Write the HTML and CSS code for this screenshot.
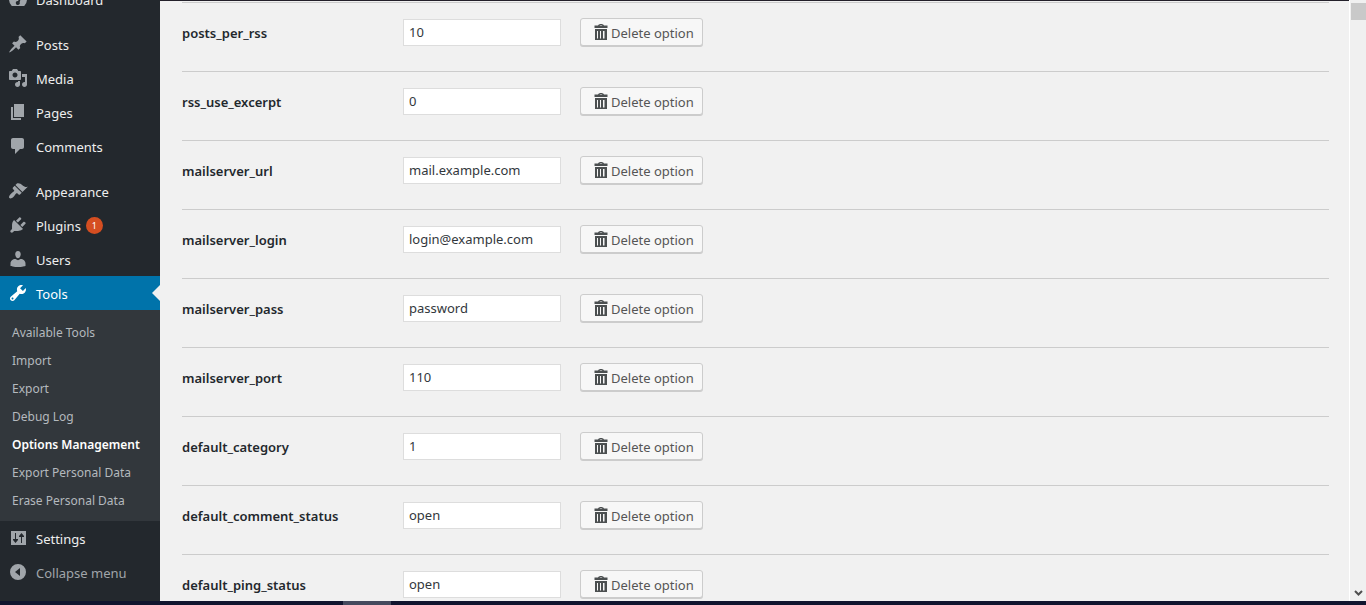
FILE: index.html
```html
<!DOCTYPE html>
<html lang="en">
<head>
<meta charset="utf-8">
<title>Options Management</title>
<link rel="stylesheet" href="styles.css">
</head>
<body>
<svg class="sprite" aria-hidden="true">
  <symbol id="trash" viewBox="0 0 14 17"><path fill-rule="evenodd" d="M4 1.500C4.500.5 5.500 0 7 0s2.500.5 3 1.500h3.500V4H.5V1.500zM5.500 1.500h3C8 1.100 7.600 1 7 1s-1 .1-1.500.5zM1 5h12v11H1zM3 7v7.500h1V7zM6 7v7.500h1V7zM9 7v7.500h1.500V7z"/></symbol>
</svg>
<div class="workspace">
  <nav class="sidebar" aria-label="Main menu">
    <ul class="menu">
      <li><a class="menu-link" href="#"><svg class="icon" viewBox="0 0 20 20"><path fill-rule="evenodd" d="M3.760 17h12.480A9 9 0 1 0 3.760 17zM10 4a1 1 0 1 1 0 2 1 1 0 0 1 0-2zM4 9a1 1 0 1 1 0 2 1 1 0 0 1 0-2zm12 0a1 1 0 1 1 0 2 1 1 0 0 1 0-2zm-2-3-2.400 7.200A2 2 0 1 1 10 12z"/></svg>Dashboard</a></li>
      <li class="group"><a class="menu-link" href="#"><svg class="icon" viewBox="0 0 20 20"><path d="M10.440 3.020l1.820-1.820 6.360 6.350-1.830 1.820c-1.050-.68-2.480-.57-3.410.36l-.75.75c-.92.93-1.040 2.350-.35 3.410l-1.830 1.820-2.410-2.410-2.800 2.790c-.42.42-3.380 2.710-3.800 2.290s1.860-3.390 2.280-3.810l2.790-2.790L4.100 9.360l1.830-1.820c1.050.69 2.480.57 3.400-.36l.75-.75c.93-.92 1.050-2.350.36-3.410z"/></svg>Posts</a></li>
      <li><a class="menu-link" href="#"><svg class="icon" viewBox="0 0 20 20"><path fill-rule="evenodd" d="M13 11V4c0-.55-.45-1-1-1h-1.670L9 1H5L3.670 3H2c-.55 0-1 .45-1 1v7c0 .55.45 1 1 1h10c.55 0 1-.45 1-1zM7 4.500c1.380 0 2.500 1.120 2.500 2.500S8.380 9.500 7 9.500 4.500 8.380 4.500 7 5.620 4.500 7 4.500zM14 6h5v10.500c0 1.380-1.120 2.500-2.500 2.500S14 17.880 14 16.500s1.120-2.500 2.500-2.500c.17 0 .34.02.5.05V9h-3V6zm-4 8.050V13h2v3.500c0 1.380-1.120 2.500-2.500 2.500S7 17.880 7 16.500 8.120 14 9.500 14c.17 0 .34.02.5.05z"/></svg>Media</a></li>
      <li><a class="menu-link" href="#"><svg class="icon" viewBox="0 0 20 20"><path d="M6 15V2h10v13H6zm-1 1h8v2H3V5h2v11z"/></svg>Pages</a></li>
      <li><a class="menu-link" href="#"><svg class="icon" viewBox="0 0 20 20"><path d="M5 2h9c1.100 0 2 .9 2 2v7c0 1.100-.9 2-2 2h-2l-5 5v-5H5c-1.100 0-2-.9-2-2V4c0-1.100.9-2 2-2z"/></svg>Comments</a></li>
      <li class="group"><a class="menu-link" href="#"><svg class="icon" viewBox="0 0 20 20"><path d="M14.480 11.060L7.410 3.990l1.500-1.500c.5-.56 2.300-.47 3.510.32 1.210.8 1.430 1.280 2.910 2.100 1.180.64 2.450 1.260 4.450.85zm-.71.71L6.700 4.700 4.930 6.470c-.39.39-.39 1.020 0 1.410l1.060 1.060c.39.39.39 1.030 0 1.420-.6.6-1.430 1.110-2.210 1.690-.35.26-.7.53-1.010.84C1.430 14.230.4 16.080 1.400 17.070c.99 1 2.840-.03 4.180-1.360.31-.31.58-.66.85-1.020.57-.78 1.080-1.610 1.690-2.210.39-.39 1.020-.39 1.410 0l1.060 1.060c.39.39 1.020.39 1.410 0z"/></svg>Appearance</a></li>
      <li><a class="menu-link" href="#"><svg class="icon" viewBox="0 0 20 20"><path d="M13.110 4.360L9.870 7.600 8 5.730l3.240-3.240c.35-.34 1.050-.2 1.560.32.52.51.66 1.210.31 1.550zm-8 1.770l.91-1.120 9.010 9.010-1.190.84c-.71.71-2.630 1.160-3.820 1.160H6.140L4.900 17.260c-.59.59-1.540.59-2.120 0-.59-.58-.59-1.530 0-2.120l1.240-1.240v-3.880c0-1.130.4-3.190 1.090-3.890zm7.260 3.970l3.240-3.240c.34-.35 1.040-.21 1.550.31.52.51.66 1.210.31 1.550l-3.240 3.250z"/></svg>Plugins <span class="badge">1</span></a></li>
      <li><a class="menu-link" href="#"><svg class="icon" viewBox="0 0 20 20"><path d="M10 9.250c-2.270 0-2.730-3.440-2.730-3.440C7 4.020 7.820 2 9.970 2c2.160 0 2.980 2.020 2.710 3.810 0 0-.41 3.440-2.680 3.440zM7.500 10 10 11.300 12.500 10c2.800 0 5 1.900 5 4.500v2.500s-3.700 1.100-7.500 1.100S2.500 17 2.500 17v-2.500C2.500 11.900 4.700 10 7.500 10z"/></svg>Users</a></li>
      <li><a class="menu-link current" href="#"><svg class="icon" viewBox="0 0 20 20"><path fill-rule="evenodd" d="M16.680 9.770c-1.340 1.340-3.300 1.670-4.950.99l-5.410 6.520c-.99.99-2.590.99-3.580 0s-.99-2.590 0-3.570l6.520-5.420c-.68-1.650-.35-3.610.99-4.950 1.280-1.280 3.120-1.620 4.720-1.060l-2.890 2.890 2.820 2.820 2.860-2.870c.53 1.580.18 3.390-1.080 4.650zM3.810 16.210c.4.39 1.040.39 1.430 0 .4-.4.4-1.040 0-1.430-.39-.4-1.030-.4-1.430 0-.39.39-.39 1.030 0 1.430z"/></svg>Tools</a>
        <ul class="submenu">
          <li><a class="submenu-link" href="#">Available Tools</a></li>
          <li><a class="submenu-link" href="#">Import</a></li>
          <li><a class="submenu-link" href="#">Export</a></li>
          <li><a class="submenu-link" href="#">Debug Log</a></li>
          <li><a class="submenu-link selected" href="#" aria-current="page">Options Management</a></li>
          <li><a class="submenu-link" href="#">Export Personal Data</a></li>
          <li><a class="submenu-link" href="#">Erase Personal Data</a></li>
        </ul>
      </li>
      <li><a class="menu-link" href="#"><svg class="icon" viewBox="0 0 20 20"><path fill-rule="evenodd" d="M18 17V3H3v14zM7 5h1v6h2v1l-2.500 3L5 12v-1h2zM13 15h1V9h2V8l-2.500-3L11 8v1h2z"/></svg>Settings</a></li>
    </ul>
    <button class="collapse" type="button"><svg class="icon" viewBox="0 0 20 20"><path fill-rule="evenodd" d="M10 2a8 8 0 1 0 0 16 8 8 0 0 0 0-16zm2 4v8l-5-4z"/></svg>Collapse menu</button>
  </nav>
  <main class="content">
    <table class="options">
      <tbody>
        <tr><th scope="row"><label for="o1">posts_per_rss</label></th><td><div class="controls"><input class="field" id="o1" type="text" value="10"><button class="delete" type="button"><svg class="trash"><use href="#trash"/></svg>Delete option</button></div></td></tr>
        <tr><th scope="row"><label for="o2">rss_use_excerpt</label></th><td><div class="controls"><input class="field" id="o2" type="text" value="0"><button class="delete" type="button"><svg class="trash"><use href="#trash"/></svg>Delete option</button></div></td></tr>
        <tr><th scope="row"><label for="o3">mailserver_url</label></th><td><div class="controls"><input class="field" id="o3" type="text" value="mail.example.com"><button class="delete" type="button"><svg class="trash"><use href="#trash"/></svg>Delete option</button></div></td></tr>
        <tr><th scope="row"><label for="o4">mailserver_login</label></th><td><div class="controls"><input class="field" id="o4" type="text" value="login@example.com"><button class="delete" type="button"><svg class="trash"><use href="#trash"/></svg>Delete option</button></div></td></tr>
        <tr><th scope="row"><label for="o5">mailserver_pass</label></th><td><div class="controls"><input class="field" id="o5" type="text" value="password"><button class="delete" type="button"><svg class="trash"><use href="#trash"/></svg>Delete option</button></div></td></tr>
        <tr><th scope="row"><label for="o6">mailserver_port</label></th><td><div class="controls"><input class="field" id="o6" type="text" value="110"><button class="delete" type="button"><svg class="trash"><use href="#trash"/></svg>Delete option</button></div></td></tr>
        <tr><th scope="row"><label for="o7">default_category</label></th><td><div class="controls"><input class="field" id="o7" type="text" value="1"><button class="delete" type="button"><svg class="trash"><use href="#trash"/></svg>Delete option</button></div></td></tr>
        <tr><th scope="row"><label for="o8">default_comment_status</label></th><td><div class="controls"><input class="field" id="o8" type="text" value="open"><button class="delete" type="button"><svg class="trash"><use href="#trash"/></svg>Delete option</button></div></td></tr>
        <tr><th scope="row"><label for="o9">default_ping_status</label></th><td><div class="controls"><input class="field" id="o9" type="text" value="open"><button class="delete" type="button"><svg class="trash"><use href="#trash"/></svg>Delete option</button></div></td></tr>
      </tbody>
    </table>
  </main>
  <div class="scrollbar" aria-hidden="true">
    <div class="thumb"></div>
    <svg class="arrow" viewBox="0 0 9 6"><path d="M1 1l3.500 3.500L8 1" fill="none" stroke="#505050" stroke-width="2"/></svg>
  </div>
</div>
<div class="taskbar" aria-hidden="true"><div class="task"></div></div>
</body>
</html>
```
FILE: styles.css
```css
* { box-sizing: border-box; }

body {
  margin: 0;
  height: 100vh;
  display: flex;
  flex-direction: column;
  overflow: hidden;
  background: #f1f1f1;
  color: #32373c;
  font: 13px/18px "Noto Sans", "Open Sans", sans-serif;
}

ul { list-style: none; margin: 0; padding: 0; }
a { text-decoration: none; }
button { font: inherit; cursor: pointer; }

.sprite { display: none; }

.workspace {
  flex: 1;
  min-height: 0;
  display: flex;
}

/* Sidebar, scrolled so that its first item is half out of view */
.sidebar {
  flex: none;
  width: 160px;
  overflow: hidden;
  background: #23282d;
}
.menu { margin-top: -18px; }
.group { margin-top: 11px; }

.menu-link,
.collapse {
  display: flex;
  align-items: center;
  gap: 8px;
  height: 34px;
  padding: 2px 8px 0;
  color: #eee;
}
.icon {
  flex: none;
  width: 20px;
  height: 20px;
  margin-bottom: 2px;
  fill: #a0a5aa;
}
.current {
  position: relative;
  background: #0073aa;
  color: #fff;
}
.current .icon { fill: #fff; }
.current::after {
  content: "";
  position: absolute;
  right: 0;
  top: 9px;
  border: 8px solid transparent;
  border-left: 0;
  border-right-color: #f1f1f1;
}
.badge {
  width: 17px;
  height: 17px;
  margin: 0 0 2px -3px;
  border-radius: 50%;
  background: #d54e21;
  color: #fff;
  font-size: 9px;
  line-height: 17px;
  text-align: center;
}

.submenu {
  padding: 8px 0 7px;
  background: #32373c;
}
.submenu-link {
  display: block;
  padding: 6px 12px 4px;
  color: #b4b9be;
  font-size: 12px;
  white-space: nowrap;
}
.selected { color: #fff; font-weight: 600; }

.collapse {
  width: 100%;
  border: 0;
  background: none;
  color: #a0a5aa;
}

/* Options list */
.content {
  flex: 1;
  min-width: 0;
  overflow: hidden;
  padding: 1px 20px 0 22px;
  border-top: 1px solid #23202a;
}
.options {
  width: 100%;
  border-collapse: separate;
  border-spacing: 0;
  border-top: 1px solid #ccc;
}
.options th,
.options td {
  height: 69px;
  padding: 15px 0 23px;
  border-bottom: 1px solid #ccc;
  vertical-align: top;
}
.options th {
  width: 221px;
  padding-top: 21px;
  color: #23282d;
  font-weight: 600;
  text-align: left;
}
.controls {
  display: flex;
  align-items: center;
  gap: 19px;
}
.field {
  width: 158px;
  height: 27px;
  padding: 0 5px;
  border: 1px solid #ddd;
  background: #fff;
  color: #32373c;
  font: inherit;
}
.delete {
  display: flex;
  align-items: center;
  gap: 3px;
  height: 28px;
  padding: 1px 8px 0 13px;
  border: 1px solid #ccc;
  border-radius: 3px;
  background: #f7f7f7;
  box-shadow: 0 1px 0 #ccc;
  color: #555;
  white-space: nowrap;
}
.trash {
  width: 14px;
  height: 17px;
  fill: #4b4f50;
}

.scrollbar {
  flex: none;
  width: 17px;
  display: flex;
  flex-direction: column;
  align-items: center;
  justify-content: space-between;
  padding: 3px 0 5px;
  border-left: 1px solid #fff;
  background: #f0f0f0;
}
.thumb {
  width: 15px;
  height: 17px;
  background: #c9c9c9;
}
.arrow { width: 9px; height: 6px; }

.taskbar {
  flex: none;
  height: 4px;
  padding-left: 343px;
  background: #10142e;
}
.task {
  width: 48px;
  height: 100%;
  background: #454a5e;
}
```
